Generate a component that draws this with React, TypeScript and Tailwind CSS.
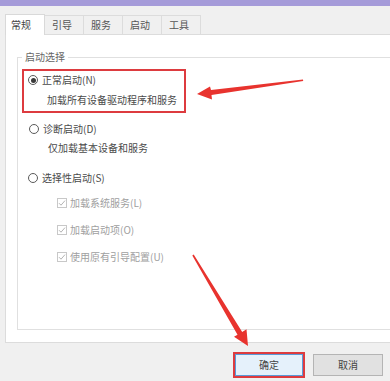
import React from "react";

const font = { fontFamily: '"Noto Sans CJK SC", "Noto Sans", sans-serif' };

function Radio({ checked }: { checked?: boolean }) {
  return (
    <span className="w-[10px] h-[10px] rounded-full border border-[#5a5a5a] bg-white flex items-center justify-center shrink-0">
      {checked && <span className="w-[5px] h-[5px] rounded-full bg-[#3a3a3a]" />}
    </span>
  );
}

function Check({ label }: { label: string }) {
  return (
    <div className="flex items-center h-[14px] pl-[35px] gap-[3px] text-[#a0a0a0]">
      <span className="w-[10px] h-[10px] border border-[#c8c8c8] bg-white flex items-center justify-center shrink-0">
        <svg width="8" height="8" viewBox="0 0 8 8">
          <path d="M1 4.2 L3 6.2 L7 1.6" fill="none" stroke="#b4b4b4" strokeWidth="1" />
        </svg>
      </span>
      <span>{label}</span>
    </div>
  );
}

export default function App() {
  const tabs = ["引导", "服务", "启动", "工具"];
  return (
    <div className="relative w-[390px] h-[381px] overflow-hidden bg-[#f0f0f0] text-[10px] leading-[14px] text-[#4a4a4a]" style={font}>
      <div className="h-[6px] bg-[#a59bd9]" />
      <div className="flex pl-[5px] pt-[8px] h-[28px] items-end">
        <div className="relative z-10 h-[21px] w-[40px] -mb-px bg-white border border-b-0 border-[#d9d9d9] flex items-center pl-[5px] text-[#444]">
          常规
        </div>
        {tabs.map((t) => (
          <div
            key={t}
            className="h-[19px] w-[39px] border-t border-r border-[#dcdcdc] flex items-center pl-[7px] text-[#555]"
          >
            {t}
          </div>
        ))}
      </div>
      <div className="ml-[5px] mr-[-10px] h-[309px] bg-white border border-[#dcdcdc] pl-[11px] pt-[22px]">
        <div className="relative h-[273px] border border-[#e0e0e0] mr-[-10px] pl-[4px] pt-[11px]">
          <span className="absolute left-[4px] top-[-8px] bg-white px-[3px] text-[#666]">启动选择</span>
          <div className="w-[164px] h-[44px] border-2 border-[#dd3b3f] pt-[2px]">
            <div className="flex items-center gap-[4px] pl-[4px] h-[14px]">
              <Radio checked />
              <span>正常启动(N)</span>
            </div>
            <div className="mt-[6px] pl-[23px] h-[14px]">加载所有设备驱动程序和服务</div>
          </div>
          <div className="mt-[9px] flex items-center gap-[4px] pl-[7px] h-[14px]">
            <Radio />
            <span>诊断启动(D)</span>
          </div>
          <div className="mt-[5px] pl-[26px] h-[14px]">仅加载基本设备和服务</div>
          <div className="mt-[16px] flex items-center gap-[4px] pl-[6px] h-[14px]">
            <Radio />
            <span>选择性启动(S)</span>
          </div>
          <div className="mt-[11px]"><Check label="加载系统服务(L)" /></div>
          <div className="mt-[13px]"><Check label="加载启动项(O)" /></div>
          <div className="mt-[13px]"><Check label="使用原有引导配置(U)" /></div>
        </div>
      </div>
      <div className="flex justify-end items-start gap-[8px] pr-[7px] pt-[9px]">
        <div className="w-[72px] h-[26px] border-2 border-[#dd3b3f]">
          <div className="w-full h-full bg-[#e5f1fb] border border-[#5a9ad8] flex items-center justify-center text-[#444]">
            确定
          </div>
        </div>
        <div className="mt-[2px] w-[70px] h-[22px] bg-[#e1e1e1] border border-[#b4b4b4] flex items-center justify-center text-[#444]">
          取消
        </div>
      </div>
      <svg className="absolute left-0 top-0 pointer-events-none" width="390" height="381" viewBox="0 0 390 381">
        <polygon
          points="303,79.4 211,90 210,86.5 197,94 212,99.5 211.5,95 303.2,81"
          fill="#e8332e"
        />
        <polygon
          points="192.3,255.4 237.5,334.8 234,336.8 248,346 246.5,329.3 242.2,332 193.7,254.6"
          fill="#e8332e"
        />
      </svg>
    </div>
  );
}
